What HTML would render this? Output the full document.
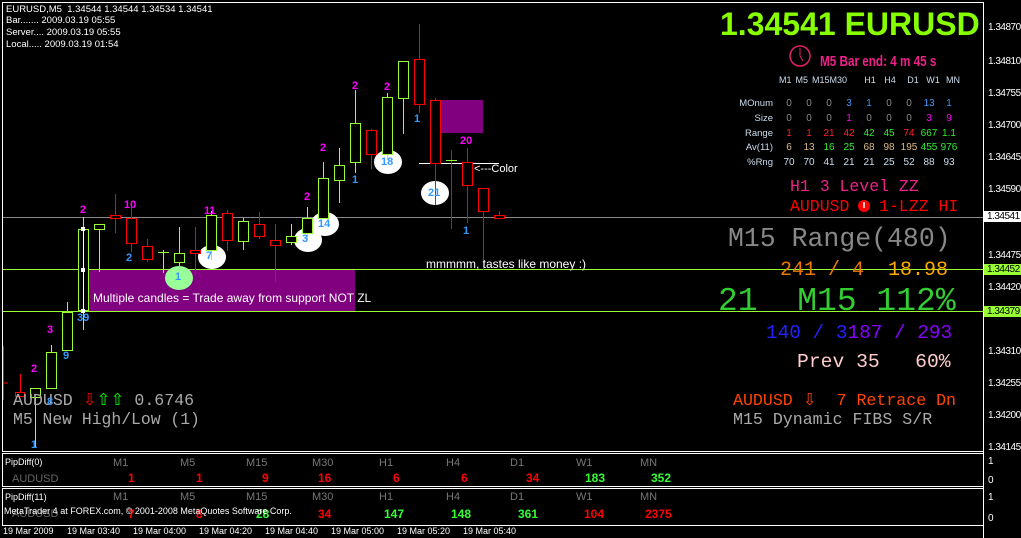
<!DOCTYPE html>
<html><head><meta charset="utf-8"><style>
body{margin:0;width:1021px;height:538px;background:#000;overflow:hidden;position:relative;font-family:"Liberation Sans",sans-serif}
.t{position:absolute;white-space:nowrap;line-height:1}
.m{font-family:"Liberation Mono",monospace}
.ax{position:absolute;left:988px;font-size:10px;color:#fff;letter-spacing:-0.5px}
.c{display:inline-block;width:20px;text-align:center}
</style></head><body>
<svg width="1021" height="538" style="position:absolute;left:0;top:0">
<rect x="2.5" y="2.5" width="981" height="449" fill="none" stroke="#fff"/>
<rect x="440" y="100" width="43" height="33" fill="#800080"/>
<rect x="89" y="269" width="266" height="42" fill="#800080"/>
<line x1="3" y1="217.5" x2="983" y2="217.5" stroke="#888"/>
<line x1="3" y1="269.5" x2="983" y2="269.5" stroke="#9f3"/>
<line x1="3" y1="311.5" x2="983" y2="311.5" stroke="#9f3"/>
<line x1="419" y1="163.5" x2="499" y2="163.5" stroke="#fff"/>
<g fill="#fff"><ellipse cx="388" cy="162" rx="14" ry="12"/><ellipse cx="435" cy="193" rx="14" ry="12"/><ellipse cx="325" cy="224" rx="14" ry="12"/><ellipse cx="308" cy="240" rx="14" ry="12"/><ellipse cx="212" cy="257" rx="14" ry="12"/></g>
<ellipse cx="179" cy="278" rx="14" ry="12" fill="#9f9"/>
<g stroke-width="1" fill="none">
<path stroke="#f00" d="M3.5 346V400M3.5 383H8M20.5 374V396M35.5 397V447M467.5 148V223M483.5 188V270M499.5 211V218M451.5 150V229"/>
<g stroke="#f00">
<path d="M115.5 194V233M131.5 207V252M147.5 239V262M195.5 227V275M227.5 210V251M259.5 212V239M275.5 224V282M371.5 129V169M419.5 24V113M435.5 98V205"/>
<rect x="15.5" y="392.5" width="9" height="4" fill="#000"/>
<rect x="110.5" y="215.5" width="10" height="3" fill="#000"/>
<rect x="126.5" y="218.5" width="10" height="25" fill="#000"/>
<rect x="142.5" y="246.5" width="10" height="13" fill="#000"/>
<rect x="190.5" y="250.5" width="10" height="3" fill="#000"/>
<rect x="222.5" y="213.5" width="10" height="27" fill="#000"/>
<rect x="254.5" y="224.5" width="10" height="12" fill="#000"/>
<rect x="270.5" y="240.5" width="10" height="5" fill="#000"/>
<rect x="366.5" y="130.5" width="10" height="24" fill="#000"/>
<rect x="414.5" y="59.5" width="10" height="45" fill="#000"/>
<rect x="430.5" y="100.5" width="10" height="63" fill="#000"/>
<rect x="462.5" y="162.5" width="10" height="23" fill="#000"/>
<rect x="478.5" y="188.5" width="10" height="23" fill="#000"/>
<rect x="494.5" y="215.5" width="10" height="3" fill="#000"/>
</g>
<g stroke="#9f3">
<path d="M35.5 388V447M51.5 345V388M67.5 302V350M83.5 217V330M99.5 224V272M163.5 250V273M179.5 227V270M211.5 211V260M243.5 218V250M291.5 224V245M307.5 207V240M323.5 162V218M339.5 148V203M355.5 90V173M387.5 93V160M403.5 61V134M158 252.5H169M446 160.5H457"/>
<rect x="30.5" y="388.5" width="10" height="9" fill="#000"/>
<rect x="46.5" y="352.5" width="10" height="36" fill="#000"/>
<rect x="62.5" y="312.5" width="10" height="38" fill="#000"/>
<rect x="78.5" y="229.5" width="10" height="81" fill="#000"/>
<rect x="94.5" y="224.5" width="10" height="5" fill="#000"/>
<rect x="174.5" y="253.5" width="10" height="9" fill="#000"/>
<rect x="206.5" y="215.5" width="10" height="35" fill="#000"/>
<rect x="238.5" y="221.5" width="10" height="20" fill="#000"/>
<rect x="286.5" y="236.5" width="10" height="6" fill="#000"/>
<rect x="302.5" y="218.5" width="10" height="15" fill="#000"/>
<rect x="318.5" y="178.5" width="10" height="40" fill="#000"/>
<rect x="334.5" y="165.5" width="10" height="15" fill="#000"/>
<rect x="350.5" y="123.5" width="10" height="39" fill="#000"/>
<rect x="382.5" y="97.5" width="10" height="57" fill="#000"/>
<rect x="398.5" y="61.5" width="10" height="37" fill="#000"/>
</g>
<path stroke="#fff" d="M83.5 229V310"/>
</g>
<g fill="#fff"><rect x="81" y="227" width="4" height="4"/><rect x="81" y="268" width="4" height="4"/><rect x="81" y="309" width="4" height="4"/></g>
<line x1="983.5" y1="2" x2="983.5" y2="538" stroke="#fff"/>
<rect x="2.5" y="453.5" width="981" height="33" fill="none" stroke="#fff"/>
<rect x="2.5" y="488.5" width="981" height="37" fill="none" stroke="#fff"/>
<circle cx="800" cy="56" r="10" fill="none" stroke="#e0206a" stroke-width="1.5"/>
<path d="M800 48V56L803 61" stroke="#e0206a" fill="none"/>
<circle cx="864" cy="206" r="6" fill="#f00"/>
<path d="M864 202V208" stroke="#fff" stroke-width="1.5"/>
</svg>
<div class="t" style="left:6px;top:5px;font-size:9.5px;color:#fff">EURUSD,M5 &nbsp;1.34544 1.34544 1.34534 1.34541</div>
<div class="t" style="left:6px;top:16px;font-size:9.5px;color:#fff">Bar....... 2009.03.19 05:55</div>
<div class="t" style="left:6px;top:28px;font-size:9.5px;color:#fff">Server.... 2009.03.19 05:55</div>
<div class="t" style="left:6px;top:40px;font-size:9.5px;color:#fff">Local..... 2009.03.19 01:54</div>
<div class="t" style="left:720px;top:8px;font-size:32px;font-weight:bold;color:#8f0">1.34541 EURUSD</div>
<div class="t" style="left:820px;top:54px;font-size:15px;font-weight:bold;color:#f0208a;transform:scaleX(.78);transform-origin:left">M5 Bar end: 4 m 45 s</div>
<div class="t" style="left:779px;top:76px;font-size:9px;color:#cde">
<span style="margin-right:4px">M1</span><span style="margin-right:4px">M5</span><span>M15M30</span></div>
<div class="t" style="left:860px;top:76px;font-size:9px;color:#cde"><span class="c">H1</span><span class="c">H4</span><span class="c" style="margin-left:3px">D1</span><span class="c">W1</span><span class="c">MN</span></div>
<div style="position:absolute;left:735px;top:97px;font-size:9.5px;line-height:14.8px;color:#cde;text-align:right;width:38px">MOnum<br>Size<br>Range<br>Av(11)<br>%Rng</div>
<div class="t" style="left:779px;top:97px;font-size:10px;line-height:14.8px;color:#888">
<span class="c">0</span><span class="c">0</span><span class="c">0</span><span class="c" style="color:#39f">3</span><span class="c" style="color:#39f">1</span><span class="c">0</span><span class="c">0</span><span class="c" style="color:#39f">13</span><span class="c" style="color:#39f">1</span><br>
<span class="c">0</span><span class="c">0</span><span class="c">0</span><span class="c" style="color:#f0f">1</span><span class="c">0</span><span class="c">0</span><span class="c">0</span><span class="c" style="color:#f0f">3</span><span class="c" style="color:#f0f">9</span><br>
<span class="c" style="color:#f22">1</span><span class="c" style="color:#f22">1</span><span class="c" style="color:#f22">21</span><span class="c" style="color:#f22">42</span><span class="c" style="color:#3e3">42</span><span class="c" style="color:#3e3">45</span><span class="c" style="color:#f22">74</span><span class="c" style="color:#3e3">667</span><span class="c" style="color:#3e3">1.1</span><br>
<span class="c" style="color:#db8">6</span><span class="c" style="color:#db8">13</span><span class="c" style="color:#3e3">16</span><span class="c" style="color:#3e3">25</span><span class="c" style="color:#db8">68</span><span class="c" style="color:#db8">98</span><span class="c" style="color:#db8">195</span><span class="c" style="color:#3e3">455</span><span class="c" style="color:#3e3">976</span><br>
<span style="color:#cde"><span class="c">70</span><span class="c">70</span><span class="c">41</span><span class="c">21</span><span class="c">21</span><span class="c">25</span><span class="c">52</span><span class="c">88</span><span class="c">93</span></span></div>
<div class="t m" style="left:790px;top:179px;font-size:16.5px;color:#f0208a">H1 3 Level ZZ</div>
<div class="t m" style="left:790px;top:199px;font-size:16.5px;color:#f00">AUDUSD &nbsp; 1-LZZ HI</div>
<div class="t m" style="left:728px;top:226px;font-size:26.5px;color:#888">M15 Range(480)</div>
<div class="t m" style="left:780px;top:261px;font-size:20px;color:#e70">241 / 4 &nbsp;<span style="color:#fa0">18.98</span></div>
<div class="t m" style="left:718px;top:285px;font-size:33px;color:#3c3">21 &nbsp;M15 112%</div>
<div class="t m" style="left:766px;top:324px;font-size:19.4px;color:#22f">140 / 3<span style="color:#80f">187 / 293</span></div>
<div class="t m" style="left:797px;top:353px;font-size:19.7px;color:#fcc">Prev 35 &nbsp; 60%</div>
<div class="t m" style="left:733px;top:393px;font-size:16.6px;color:#f40">AUDUSD &#8681; &nbsp;7 Retrace Dn</div>
<div class="t m" style="left:733px;top:412px;font-size:16.6px;color:#aaa">M15 Dynamic FIBS S/R</div>
<div class="t m" style="left:13px;top:393px;font-size:16.6px;color:#aaa">AUDUSD <span style="color:#f00">&#8681;</span><span style="color:#0f0">&#8679;&#8679;</span> 0.6746</div>
<div class="t m" style="left:13px;top:412px;font-size:16.4px;color:#aaa">M5 New High/Low (1)</div>
<div class="t" style="left:93px;top:292px;font-size:12px;color:#fff">Multiple candles = Trade away from support NOT ZL</div>
<div class="t" style="left:426px;top:258px;font-size:12px;color:#fff">mmmmm, tastes like money :)</div>
<div class="t" style="left:474px;top:164px;font-size:11px;color:#fff">&lt;---Color</div>
<div style="position:absolute;left:0;top:0;font-size:11px;font-weight:bold;color:#f0f">
<span class="t" style="left:80px;top:205px">2</span><span class="t" style="left:124px;top:200px">10</span><span class="t" style="left:204px;top:206px">11</span><span class="t" style="left:304px;top:192px">2</span><span class="t" style="left:320px;top:143px">2</span><span class="t" style="left:352px;top:81px">2</span><span class="t" style="left:384px;top:82px">2</span><span class="t" style="left:460px;top:136px">20</span><span class="t" style="left:47px;top:325px">3</span><span class="t" style="left:31px;top:364px">2</span></div>
<div style="position:absolute;left:0;top:0;font-size:11px;font-weight:bold;color:#39f">
<span class="t" style="left:126px;top:253px">2</span><span class="t" style="left:175px;top:272px">1</span><span class="t" style="left:206px;top:251px">7</span><span class="t" style="left:302px;top:234px">3</span><span class="t" style="left:318px;top:219px">14</span><span class="t" style="left:381px;top:157px">18</span><span class="t" style="left:428px;top:188px">21</span><span class="t" style="left:352px;top:175px">1</span><span class="t" style="left:414px;top:114px">1</span><span class="t" style="left:463px;top:226px">1</span><span class="t" style="left:77px;top:313px">39</span><span class="t" style="left:63px;top:351px">9</span><span class="t" style="left:47px;top:397px">8</span><span class="t" style="left:31px;top:440px">1</span></div>
<div class="ax" style="top:22px">1.34870</div><div class="ax" style="top:56px">1.34810</div><div class="ax" style="top:88px">1.34755</div><div class="ax" style="top:120px">1.34700</div><div class="ax" style="top:152px">1.34645</div><div class="ax" style="top:184px">1.34590</div>
<div class="ax" style="top:211px;left:984px;background:#fff;color:#000;padding:0 3px">1.34541</div>
<div class="ax" style="top:250px">1.34475</div>
<div class="ax" style="top:264px;left:984px;background:#9f3;color:#000;padding:0 3px">1.34452</div>
<div class="ax" style="top:282px">1.34420</div>
<div class="ax" style="top:306px;left:984px;background:#9f3;color:#000;padding:0 3px">1.34379</div>
<div class="ax" style="top:346px">1.34310</div><div class="ax" style="top:378px">1.34255</div><div class="ax" style="top:410px">1.34200</div><div class="ax" style="top:442px">1.34145</div>
<div class="ax" style="top:456px">1</div><div class="ax" style="top:475px">0</div><div class="ax" style="top:492px">1</div><div class="ax" style="top:513px">0</div>
<div class="t" style="left:5px;top:458px;font-size:9px;color:#fff">PipDiff(0)</div>
<div class="t" style="left:5px;top:493px;font-size:9px;color:#fff">PipDiff(11)</div>
<div class="t" style="left:12px;top:474px;font-size:11px;color:#666">AUDUSD</div>
<div class="t" style="left:12px;top:509px;font-size:11px;color:#666">AUDUSD</div>
<div style="position:absolute;left:0;top:0;font-size:11px;color:#777">
<span class="t" style="left:113px;top:458px">M1</span><span class="t" style="left:180px;top:458px">M5</span><span class="t" style="left:246px;top:458px">M15</span><span class="t" style="left:312px;top:458px">M30</span><span class="t" style="left:379px;top:458px">H1</span><span class="t" style="left:446px;top:458px">H4</span><span class="t" style="left:510px;top:458px">D1</span><span class="t" style="left:576px;top:458px">W1</span><span class="t" style="left:640px;top:458px">MN</span>
<span class="t" style="left:113px;top:492px">M1</span><span class="t" style="left:180px;top:492px">M5</span><span class="t" style="left:246px;top:492px">M15</span><span class="t" style="left:312px;top:492px">M30</span><span class="t" style="left:379px;top:492px">H1</span><span class="t" style="left:446px;top:492px">H4</span><span class="t" style="left:510px;top:492px">D1</span><span class="t" style="left:576px;top:492px">W1</span><span class="t" style="left:640px;top:492px">MN</span></div>
<div style="position:absolute;left:0;top:0;font-size:12px;font-weight:bold;color:#f00">
<span class="t" style="left:128px;top:472px">1</span><span class="t" style="left:196px;top:472px">1</span><span class="t" style="left:262px;top:472px">9</span><span class="t" style="left:318px;top:472px">16</span><span class="t" style="left:393px;top:472px">6</span><span class="t" style="left:461px;top:472px">6</span><span class="t" style="left:526px;top:472px">34</span><span class="t" style="left:585px;top:472px;color:#3f3">183</span><span class="t" style="left:651px;top:472px;color:#3f3">352</span>
<span class="t" style="left:128px;top:508px">7</span><span class="t" style="left:196px;top:508px">8</span><span class="t" style="left:256px;top:508px;color:#3f3">28</span><span class="t" style="left:318px;top:508px">34</span><span class="t" style="left:384px;top:508px;color:#3f3">147</span><span class="t" style="left:451px;top:508px;color:#3f3">148</span><span class="t" style="left:518px;top:508px;color:#3f3">361</span><span class="t" style="left:584px;top:508px">104</span><span class="t" style="left:645px;top:508px">2375</span></div>
<div class="t" style="left:4px;top:507px;font-size:9px;color:#fff">MetaTrader 4 at FOREX.com, © 2001-2008 MetaQuotes Software Corp.</div>
<div style="position:absolute;left:0;top:527px;font-size:9px;color:#fff">
<span class="t" style="left:3px;top:0">19 Mar 2009</span><span class="t" style="left:67px;top:0">19 Mar 03:40</span><span class="t" style="left:133px;top:0">19 Mar 04:00</span><span class="t" style="left:199px;top:0">19 Mar 04:20</span><span class="t" style="left:265px;top:0">19 Mar 04:40</span><span class="t" style="left:331px;top:0">19 Mar 05:00</span><span class="t" style="left:397px;top:0">19 Mar 05:20</span><span class="t" style="left:463px;top:0">19 Mar 05:40</span></div>
</body></html>
